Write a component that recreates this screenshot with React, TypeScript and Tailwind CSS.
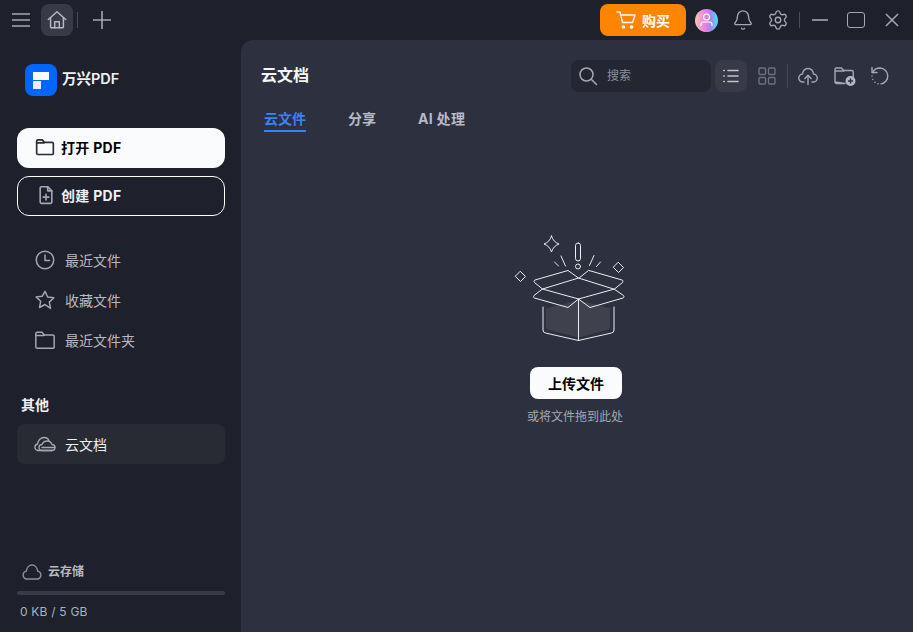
import { Bell, Settings } from "lucide-react";

const CJK = "font-['Inter','Noto_Sans_CJK_SC',sans-serif]";

function Svg({ size = 24, sw = 1.6, children, className = "" }: { size?: number; sw?: number; children: React.ReactNode; className?: string }) {
  return (
    <svg width={size} height={size} viewBox="0 0 24 24" fill="none" stroke="currentColor" strokeWidth={sw} strokeLinecap="round" strokeLinejoin="round" className={className}>
      {children}
    </svg>
  );
}

function FolderIcon({ size = 22, sw = 1.6, className = "" }: { size?: number; sw?: number; className?: string }) {
  return (
    <Svg size={size} sw={sw} className={className}>
      <path d="M2 19.5V5a1.5 1.5 0 0 1 1.5-1.5h5.2l2.6 3h9.2A1.5 1.5 0 0 1 22 8v12a1 1 0 0 1-1 1H3.5A1.5 1.5 0 0 1 2 19.5z" />
      <path d="M2 7h9" />
    </Svg>
  );
}

function TitleBar() {
  return (
    <div className="h-10 flex items-center pl-3 pr-[14px] shrink-0">
      <svg width="18" height="14" viewBox="0 0 18 14" stroke="#a5a8b3" strokeWidth="1.6" className="mr-[11px]">
        <path d="M0 1h18M0 7h18M0 13h18" />
      </svg>
      <div className="w-8 h-8 rounded-lg bg-[#383b47] flex items-center justify-center text-[#b6b9c3]">
        <Svg size={22}>
          <path d="M2.5 11.5 12 3l9.5 8.5" />
          <path d="M5 10v9.5a1 1 0 0 0 1 1h12a1 1 0 0 0 1-1V10" />
          <path d="M9.5 20.5V14h5v6.5" />
        </Svg>
      </div>
      <div className="w-px h-4 bg-[#4a4d58] ml-1" />
      <svg width="18" height="18" viewBox="0 0 18 18" stroke="#a5a8b3" strokeWidth="1.6" className="ml-[15px]">
        <path d="M9 0v18M0 9h18" />
      </svg>
      <div className="flex-1" />
      <button className="w-[86px] h-8 rounded-lg bg-[#ff8400] flex items-center justify-center gap-[6px] text-white text-[14px] font-bold">
        <svg width="20" height="20" viewBox="0 0 20 20" fill="none" stroke="white" strokeWidth="1.4" strokeLinecap="round" strokeLinejoin="round">
          <path d="M1 2h3l2.6 10.5h10L19 5H4.8" />
          <circle cx="7.5" cy="17" r="1.1" fill="white" />
          <circle cx="15.5" cy="17" r="1.1" fill="white" />
        </svg>
        购买
      </button>
      <div className="w-[23px] h-[23px] rounded-full ml-[9px] bg-[linear-gradient(90deg,#f3c9b8_0%,#f07be0_45%,#9a8cf5_70%,#4fe3e8_100%)] flex items-center justify-center">
        <svg width="13" height="14" viewBox="0 0 13 14" fill="none" stroke="white" strokeWidth="1.1">
          <circle cx="6.5" cy="4" r="3" />
          <path d="M1 13v-1.5a2.5 2.5 0 0 1 2.5-2.5h6a2.5 2.5 0 0 1 2.5 2.5V13" />
        </svg>
      </div>
      <Bell size={22} strokeWidth={1.5} className="text-[#a5a8b3] ml-[14px]" />
      <Settings size={22} strokeWidth={1.5} className="text-[#a5a8b3] ml-[13px]" />
      <div className="w-px h-4 bg-[#4a4d58] ml-[10px]" />
      <svg width="16" height="2" viewBox="0 0 16 2" stroke="#a5a8b3" strokeWidth="1.6" className="ml-[12px]">
        <path d="M0 1h16" />
      </svg>
      <div className="w-[18px] h-4 rounded-[3px] border-[1.6px] border-[#a5a8b3] ml-[19px]" />
      <svg width="14" height="14" viewBox="0 0 15 15" stroke="#a5a8b3" strokeWidth="1.6" className="ml-[20px]">
        <path d="M1 1l13 13M14 1 1 14" />
      </svg>
    </div>
  );
}

function NavRow({ icon, label }: { icon: React.ReactNode; label: string }) {
  return (
    <div className="h-10 flex items-center pl-[17px] gap-[9px] text-[14px] text-[#b7bac4]">
      <span className="w-[22px] flex justify-center text-[#a5a8b3]">{icon}</span>
      {label}
    </div>
  );
}

function Sidebar() {
  return (
    <aside className="w-[241px] shrink-0 flex flex-col pl-[17px] pr-4">
      <div className="flex items-center gap-[5px] ml-2 mt-6 h-8">
        <div className="w-8 h-8 rounded-lg bg-[#0066ff] flex flex-col pl-2 pt-2 gap-0">
          <div className="w-4 h-[8px] bg-white" />
          <div className="w-2 h-[8px] bg-white/90 mt-[1px]" />
        </div>
        <span className="text-[14.5px] font-semibold text-[#f0f1f4] mb-[3px]">万兴PDF</span>
      </div>

      <button className="mt-8 h-10 rounded-xl bg-[#f9fbfd] flex items-center pl-[18px] pb-[2px] gap-[6px] text-[14px] tracking-[0.3px] font-bold text-black">
        <FolderIcon size={20} sw={2} className="text-[#2b2d36]" />
        打开 PDF
      </button>
      <button className="mt-2 h-10 rounded-xl border border-white flex items-center pl-[18px] pb-[2px] gap-[5px] text-[14px] tracking-[0.3px] font-bold text-[#eef0f4]">
        <Svg size={20} sw={1.9} className="text-[#a5a8b3]">
          <path d="M5 3.5A1.5 1.5 0 0 1 6.5 2H14l5 5v13.5a1.5 1.5 0 0 1-1.500 1.500h-11A1.500 1.500 0 0 1 5 20.500z" />
          <path d="M14 2v5h5M12 11v7M8.500 14.500h7" />
        </Svg>
        创建 PDF
      </button>

      <div className="mt-6">
        <NavRow
          label="最近文件"
          icon={
            <Svg size={22}>
              <circle cx="12" cy="12" r="9.500" />
              <path d="M12 6.500V12.500h5" />
            </Svg>
          }
        />
        <NavRow
          label="收藏文件"
          icon={
            <Svg size={22}>
              <path d="m12 2.500 2.900 6.300 6.800.8-5 4.700 1.300 6.900L12 16.900l-6 3.300 1.300-6.900-5-4.700 6.800-.8z" />
            </Svg>
          }
        />
        <NavRow label="最近文件夹" icon={<FolderIcon />} />
      </div>

      <div className="mt-[34px] ml-1 text-[14px] font-bold text-[#f0f1f4]">其他</div>
      <div className="mt-[9px] h-10 rounded-lg bg-[#292b34] flex items-center pl-[17px] gap-[9px] text-[14px] text-[#eef0f4]">
        <svg width="22" height="16" viewBox="0 0 22 16" fill="none" stroke="#a5a8b3" strokeWidth="1.300" strokeLinecap="round" strokeLinejoin="round">
          <path d="M4 14.500a3.300 3.300 0 0 1-.5-6.500C4 4 7 1.500 10 1.500c2.500 0 4.500 1.500 5 3.500" />
          <path d="M8 14.500a3 3 0 0 1 0-6c1-2.500 3-3.500 5-3.500 3 0 4.500 2 5 3.500a3 3 0 0 1 0 6z" />
          <path d="M4 14.500h14M8 11.500h13" />
        </svg>
        云文档
      </div>

      <div className="flex-1" />
      <div className="flex items-center gap-[6px] ml-[5px] text-[12px] font-bold text-[#b7bac4]">
        <svg width="20" height="16" viewBox="0 0 20 16" fill="none" stroke="#8d909b" strokeWidth="1.400" strokeLinecap="round" strokeLinejoin="round">
          <path d="M5 15a4 4 0 0 1-.7-7.900C4.800 3.500 7.200 1 10 1s5.200 2.500 5.700 6.100A4 4 0 0 1 15 15z" />
        </svg>
        云存储
      </div>
      <div className="mt-[10px] h-1 rounded-full bg-[#383b47]" />
      <div className="mt-[9px] mb-[12px] ml-[3px] text-[12px] leading-4 tracking-[0.2px] text-[#a8b2c4]">0 KB / 5 GB</div>
    </aside>
  );
}

function Toolbar() {
  return (
    <div className="flex items-center">
      <div className="w-[140px] h-8 rounded-lg bg-[#242631] flex items-center pl-[7px] gap-[9px] text-[12px] text-[#8d909b]">
        <svg width="20" height="20" viewBox="0 0 20 20" fill="none" stroke="#a5a8b3" strokeWidth="1.500" strokeLinecap="round">
          <circle cx="8.500" cy="8.500" r="6.500" />
          <path d="m13.500 13.500 5 5" />
        </svg>
        搜索
      </div>
      <div className="w-8 h-8 rounded-lg bg-[#383b47] ml-1 flex items-center justify-center">
        <svg width="16" height="14" viewBox="0 0 16 14" stroke="#c0c3cc" strokeWidth="1.600" strokeLinecap="round">
          <path d="M5 1.500h10M5 7h10M5 12.500h10M.8 1.500h.4M.8 7h.4M.8 12.500h.4" />
        </svg>
      </div>
      <svg width="18" height="18" viewBox="0 0 18 18" fill="none" stroke="#6d707b" strokeWidth="1.400" className="ml-[11px]">
        <rect x="1" y="1" width="6.500" height="6.500" rx="1" />
        <rect x="10.500" y="1" width="6.500" height="6.500" rx="1" />
        <rect x="1" y="10.500" width="6.500" height="6.500" rx="1" />
        <rect x="10.500" y="10.500" width="6.500" height="6.500" rx="1" />
      </svg>
      <div className="w-px h-6 bg-[#454853] ml-[11px]" />
      <svg width="20" height="20" viewBox="0 0 20 20" fill="none" stroke="#a5a8b3" strokeWidth="1.400" strokeLinecap="round" strokeLinejoin="round" className="ml-[10px]">
        <path d="M6 16H5a4 4 0 0 1-.5-8C5 4.800 7.200 2.500 10 2.500S15 4.800 15.500 8a4 4 0 0 1-.5 8h-1" />
        <path d="M10 18.500V9.500M6.800 12.500 10 9.300l3.200 3.200" />
      </svg>
      <svg width="22" height="20" viewBox="0 0 22 20" fill="none" className="ml-4">
        <path d="M1 16V3.500A1.500 1.500 0 0 1 2.500 2h5l2.300 2.500h8A1.500 1.500 0 0 1 19.300 6v5M11 17.500H2.500A1.500 1.500 0 0 1 1 16zM1 5h9" stroke="#a5a8b3" strokeWidth="1.400" strokeLinecap="round" strokeLinejoin="round" />
        <circle cx="16.500" cy="15" r="5" fill="#b4b7c0" />
        <path d="M16.500 12.500v5M14 15h5" stroke="#2d303e" strokeWidth="1.400" />
      </svg>
      <svg width="20" height="20" viewBox="0 0 20 20" fill="none" stroke="#a5a8b3" strokeWidth="1.400" strokeLinecap="round" strokeLinejoin="round" className="ml-[14px] mr-[-2px]">
        <path d="M2 1.500v5h5" />
        <path d="M2.500 6.500C4 3.500 6.500 2 10 2a8 8 0 0 1 1 15.900" />
        <path d="M2 10v.1M2.800 13.500v.1M5 16.300v.1M8 17.800v.1" strokeDasharray="0.100 3" />
      </svg>
    </div>
  );
}

function EmptyBox() {
  return (
    <svg width="152" height="125" viewBox="0 0 152 125" fill="none" stroke="#eceef2" strokeWidth="1" strokeLinejoin="round" strokeLinecap="round">
      <path d="M46 82.500 78.500 74 110 82.500v17.500a4 4 0 0 1-3 4l-28.500 7.500-29.500-7.500a4 4 0 0 1-3-4z" fill="#3f424d" stroke="none" />
      <path d="M43 81v23a3 3 0 0 0 2.500 3l33 7.500 33-7.500a3 3 0 0 0 2.500-3V81" />
      <path d="M78.500 73v41.500" />
      <path d="M78.500 52 68 44.500 35 54a1.500 1.500 0 0 0-.5 2.500l8 6.500 36 10 36-10 8-6.500a1.500 1.500 0 0 0-.5-2.500l-33-9.500z" />
      <path d="M42.500 63 78.500 52l35 11" />
      <path d="M42.500 63 34 69.500a1.500 1.500 0 0 0 .5 2.500L68 81.500 78.500 73 90 81.500l33-9.500a1.500 1.500 0 0 0 .5-2.500L114 63" />
      <rect x="75.500" y="17" width="5" height="18" rx="2.500" />
      <circle cx="78" cy="40.500" r="2.500" />
      <path d="m61 30 4.500 10M54.500 36l4 4M94 29.500l-4.500 10M100.500 36l-4 4.500" />
      <path d="M51.500 10c1.200 4 3.500 6.500 7.500 8-4 1.500-6.300 4-7.500 8-1.200-4-3.500-6.500-7.500-8 4-1.500 6.300-4 7.500-8z" />
      <path d="m20.500 45.500 5 5-5 5-5-5zM118.500 36.500l5 5-5 5-5-5z" />
    </svg>
  );
}

function Main() {
  return (
    <main className="flex-1 min-w-0 rounded-tl-xl bg-[#2d303e] flex flex-col">
      <div className="flex items-center justify-between pl-5 pr-[25px] pt-5">
        <h1 className="text-[16px] font-bold text-[#f4f5f7] mb-[2px]">云文档</h1>
        <Toolbar />
      </div>
      <div className="flex items-start pl-[23px] mt-[17px] text-[14px] font-bold text-[#b7bac4]">
        <div className="text-[#3b82f6] border-b-2 border-[#3b82f6] pb-[1px] leading-[20px]">云文件</div>
        <div className="ml-[42px] leading-[20px]">分享</div>
        <div className="ml-[42px] leading-[20px] tracking-[0.3px]">AI 处理</div>
      </div>
      <div className="flex flex-col items-center pr-[2px] mt-[94px]">
        <EmptyBox />
        <button className="mt-4 w-[92px] h-8 rounded-lg bg-[#f9fbfd] text-[14px] font-bold text-black">上传文件</button>
        <div className="mt-[9px] mr-[2px] text-[12px] text-[#a5a8b3]">或将文件拖到此处</div>
      </div>
    </main>
  );
}

export default function App() {
  return (
    <div className={`w-[913px] h-[632px] overflow-hidden bg-[#1e202b] flex flex-col ${CJK}`}>
      <TitleBar />
      <div className="flex-1 flex min-h-0">
        <Sidebar />
        <Main />
      </div>
    </div>
  );
}
